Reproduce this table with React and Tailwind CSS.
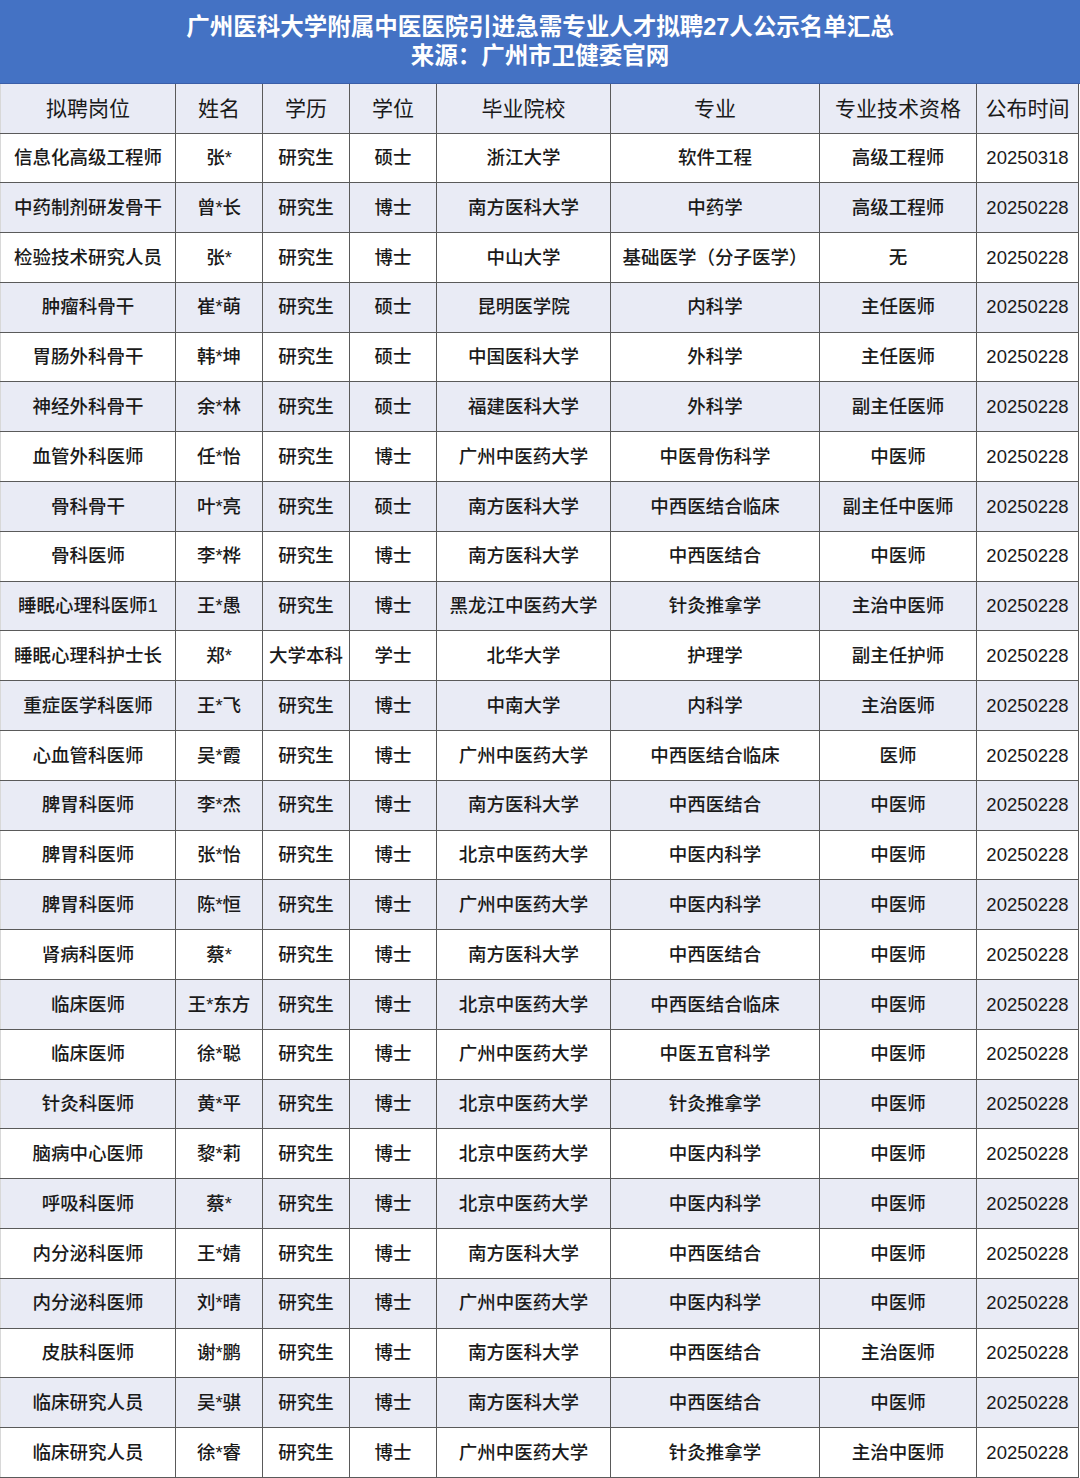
const rows = [
  ["信息化高级工程师", "张*", "研究生", "硕士", "浙江大学", "软件工程", "高级工程师", "20250318"],
  ["中药制剂研发骨干", "曾*长", "研究生", "博士", "南方医科大学", "中药学", "高级工程师", "20250228"],
  ["检验技术研究人员", "张*", "研究生", "博士", "中山大学", "基础医学（分子医学）", "无", "20250228"],
  ["肿瘤科骨干", "崔*萌", "研究生", "硕士", "昆明医学院", "内科学", "主任医师", "20250228"],
  ["胃肠外科骨干", "韩*坤", "研究生", "硕士", "中国医科大学", "外科学", "主任医师", "20250228"],
  ["神经外科骨干", "余*林", "研究生", "硕士", "福建医科大学", "外科学", "副主任医师", "20250228"],
  ["血管外科医师", "任*怡", "研究生", "博士", "广州中医药大学", "中医骨伤科学", "中医师", "20250228"],
  ["骨科骨干", "叶*亮", "研究生", "硕士", "南方医科大学", "中西医结合临床", "副主任中医师", "20250228"],
  ["骨科医师", "李*桦", "研究生", "博士", "南方医科大学", "中西医结合", "中医师", "20250228"],
  ["睡眠心理科医师1", "王*愚", "研究生", "博士", "黑龙江中医药大学", "针灸推拿学", "主治中医师", "20250228"],
  ["睡眠心理科护士长", "郑*", "大学本科", "学士", "北华大学", "护理学", "副主任护师", "20250228"],
  ["重症医学科医师", "王*飞", "研究生", "博士", "中南大学", "内科学", "主治医师", "20250228"],
  ["心血管科医师", "吴*霞", "研究生", "博士", "广州中医药大学", "中西医结合临床", "医师", "20250228"],
  ["脾胃科医师", "李*杰", "研究生", "博士", "南方医科大学", "中西医结合", "中医师", "20250228"],
  ["脾胃科医师", "张*怡", "研究生", "博士", "北京中医药大学", "中医内科学", "中医师", "20250228"],
  ["脾胃科医师", "陈*恒", "研究生", "博士", "广州中医药大学", "中医内科学", "中医师", "20250228"],
  ["肾病科医师", "蔡*", "研究生", "博士", "南方医科大学", "中西医结合", "中医师", "20250228"],
  ["临床医师", "王*东方", "研究生", "博士", "北京中医药大学", "中西医结合临床", "中医师", "20250228"],
  ["临床医师", "徐*聪", "研究生", "博士", "广州中医药大学", "中医五官科学", "中医师", "20250228"],
  ["针灸科医师", "黄*平", "研究生", "博士", "北京中医药大学", "针灸推拿学", "中医师", "20250228"],
  ["脑病中心医师", "黎*莉", "研究生", "博士", "北京中医药大学", "中医内科学", "中医师", "20250228"],
  ["呼吸科医师", "蔡*", "研究生", "博士", "北京中医药大学", "中医内科学", "中医师", "20250228"],
  ["内分泌科医师", "王*婧", "研究生", "博士", "南方医科大学", "中西医结合", "中医师", "20250228"],
  ["内分泌科医师", "刘*晴", "研究生", "博士", "广州中医药大学", "中医内科学", "中医师", "20250228"],
  ["皮肤科医师", "谢*鹏", "研究生", "博士", "南方医科大学", "中西医结合", "主治医师", "20250228"],
  ["临床研究人员", "吴*骐", "研究生", "博士", "南方医科大学", "中西医结合", "中医师", "20250228"],
  ["临床研究人员", "徐*睿", "研究生", "博士", "广州中医药大学", "针灸推拿学", "主治中医师", "20250228"],
];

const heads = ["拟聘岗位", "姓名", "学历", "学位", "毕业院校", "专业", "专业技术资格", "公布时间"];
const widths = ["w-[175px]", "w-[87px]", "w-[87px]", "w-[87px]", "w-[174px]", "w-[209px]", "w-[157px]", "w-[102px]"];

export default function App() {
  return (
    <div
      className="w-[1080px] bg-white text-[#1a1a1a]"
      style={{ fontFamily: '"Liberation Sans", "Noto Sans CJK SC", sans-serif' }}
    >
      <div className="h-[84px] bg-[#4472c4] flex flex-col items-center justify-center text-white font-bold text-[23.5px] leading-[29px] border-b border-[#3b5ea8]">
        <div>广州医科大学附属中医医院引进急需专业人才拟聘27人公示名单汇总</div>
        <div>来源：广州市卫健委官网</div>
      </div>
      <table className="table-fixed border-collapse w-[1079px]">
        <colgroup>
          {widths.map((w, i) => (
            <col key={i} className={w} />
          ))}
        </colgroup>
        <thead>
          <tr className="h-[49px] bg-[#e9ebf5]">
            {heads.map((h, i) => (
              <th
                key={i}
                className="border border-[#5a5a5a] border-t-0 first:border-l-[#d8d8d8] font-normal text-[21px] text-center p-0"
              >
                {h}
              </th>
            ))}
          </tr>
        </thead>
        <tbody>
          {rows.map((r, ri) => (
            <tr key={ri} className={ri % 2 === 1 ? "h-[49.8px] bg-[#e9ebf5]" : "h-[49.8px] bg-white"}>
              {r.map((c, ci) => (
                <td
                  key={ci}
                  className="border border-[#5a5a5a] first:border-l-[#d8d8d8] font-medium text-[18.5px] text-center p-0 whitespace-nowrap"
                >
                  {c}
                </td>
              ))}
            </tr>
          ))}
        </tbody>
      </table>
    </div>
  );
}
